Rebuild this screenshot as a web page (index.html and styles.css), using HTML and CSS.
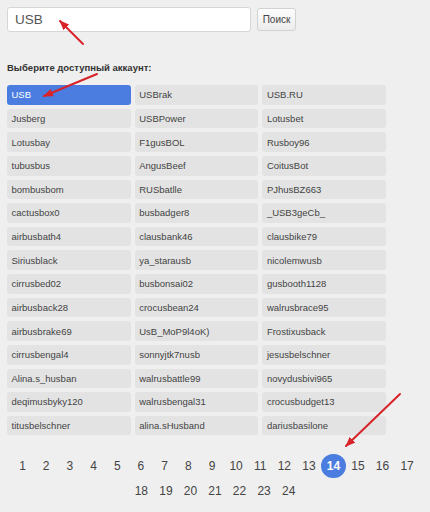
FILE: index.html
```html
<!DOCTYPE html>
<html lang="ru">
<head>
<meta charset="utf-8">
<title>Выбор аккаунта</title>
<link rel="stylesheet" href="styles.css">
</head>
<body>
<div class="page">
  <form class="search">
    <input class="search-input" type="text" value="USB">
    <button class="search-btn" type="button">Поиск</button>
  </form>

  <h3 class="label">Выберите доступный аккаунт:</h3>

  <div class="accounts">
    <button class="acc acc-active">USB</button>
    <button class="acc">USBrak</button>
    <button class="acc">USB.RU</button>
    <button class="acc">Jusberg</button>
    <button class="acc">USBPower</button>
    <button class="acc">Lotusbet</button>
    <button class="acc">Lotusbay</button>
    <button class="acc">F1gusBOL</button>
    <button class="acc">Rusboy96</button>
    <button class="acc">tubusbus</button>
    <button class="acc">AngusBeef</button>
    <button class="acc">CoitusBot</button>
    <button class="acc">bombusbom</button>
    <button class="acc">RUSbatlle</button>
    <button class="acc">PJhusBZ663</button>
    <button class="acc">cactusbox0</button>
    <button class="acc">busbadger8</button>
    <button class="acc">_USB3geCb_</button>
    <button class="acc">airbusbath4</button>
    <button class="acc">clausbank46</button>
    <button class="acc">clausbike79</button>
    <button class="acc">Siriusblack</button>
    <button class="acc">ya_starausb</button>
    <button class="acc">nicolemwusb</button>
    <button class="acc">cirrusbed02</button>
    <button class="acc">busbonsai02</button>
    <button class="acc">gusbooth1128</button>
    <button class="acc">airbusback28</button>
    <button class="acc">crocusbean24</button>
    <button class="acc">walrusbrace95</button>
    <button class="acc">airbusbrake69</button>
    <button class="acc">UsB_MoP9l4oK)</button>
    <button class="acc">Frostixusback</button>
    <button class="acc">cirrusbengal4</button>
    <button class="acc">sonnyjtk7nusb</button>
    <button class="acc">jesusbelschner</button>
    <button class="acc">Alina.s_husban</button>
    <button class="acc">walrusbattle99</button>
    <button class="acc">novydusbivi965</button>
    <button class="acc">deqimusbyky120</button>
    <button class="acc">walrusbengal31</button>
    <button class="acc">crocusbudget13</button>
    <button class="acc">titusbelschner</button>
    <button class="acc">alina.sHusband</button>
    <button class="acc">dariusbasilone</button>
  </div>

  <nav class="pager">
    <a class="pg">1</a><a class="pg">2</a><a class="pg">3</a><a class="pg">4</a><a class="pg">5</a><a class="pg">6</a><a class="pg">7</a><a class="pg">8</a><a class="pg">9</a><a class="pg">10</a><a class="pg">11</a><a class="pg">12</a><a class="pg">13</a><a class="pg pg-active">14</a><a class="pg">15</a><a class="pg">16</a><a class="pg">17</a><a class="pg">18</a><a class="pg">19</a><a class="pg">20</a><a class="pg">21</a><a class="pg">22</a><a class="pg">23</a><a class="pg">24</a>
  </nav>

  <!-- red pointer arrows drawn over the form -->
  <svg class="arrows" width="430" height="512" viewBox="0 0 430 512">
    <defs>
      <marker id="head" markerUnits="userSpaceOnUse" markerWidth="10" markerHeight="8" refX="9" refY="4" orient="auto">
        <path d="M0,0 L10,4 L0,8 Z" fill="#d8232a"/>
      </marker>
    </defs>
    <line x1="83" y1="44" x2="60" y2="21" class="arrow" marker-end="url(#head)"/>
    <line x1="97" y1="74" x2="44" y2="96" class="arrow" marker-end="url(#head)"/>
    <line x1="400" y1="394" x2="346" y2="446" class="arrow" marker-end="url(#head)"/>
  </svg>
</div>
</body>
</html>
```

FILE: styles.css
```css
html, body {
  margin: 0;
  padding: 0;
  background: #efefef;
}

.page {
  position: relative;
  width: 430px;
  height: 512px;
  box-sizing: border-box;
  padding: 7px 7px 0 7px;
  font-family: "Liberation Sans", Arial, sans-serif;
  color: #444;
  overflow: hidden;
}

/* search row */
.search {
  display: flex;
  align-items: center;
  gap: 6px;
  margin: 0;
}

.search-input {
  width: 244px;
  height: 25px;
  box-sizing: border-box;
  margin: 0;
  padding: 0 7px;
  border: 1px solid #d6d6d6;
  border-radius: 3px;
  background: #fff;
  font-family: "Liberation Sans", Arial, sans-serif;
  font-size: 13.5px;
  color: #555;
  outline: none;
}

.search-btn {
  width: 39px;
  height: 23px;
  margin: 0;
  padding: 0;
  box-sizing: border-box;
  border: 1px solid #d2d2d2;
  border-radius: 3px;
  background: linear-gradient(#fdfdfd, #ececec);
  font-family: "Liberation Sans", Arial, sans-serif;
  font-size: 10px;
  color: #444;
}

.label {
  margin: 30px 0 11px 0;
  font-size: 9.5px;
  line-height: 12px;
  font-weight: bold;
  color: #333;
}

/* account grid */
.accounts {
  display: grid;
  grid-template-columns: repeat(3, 123.7px);
  grid-auto-rows: 19.7px;
  column-gap: 4px;
  row-gap: 3.94px;
}

.acc {
  margin: 0;
  padding: 0 0 0 4.5px;
  border: 0;
  border-radius: 3px;
  background: #e3e3e3;
  text-align: left;
  font-family: "Liberation Sans", Arial, sans-serif;
  font-size: 9.5px;
  color: #444;
  white-space: nowrap;
  overflow: hidden;
}

.acc-active {
  background: #4a7ddf;
  color: #fff;
}

/* pagination */
.pager {
  display: flex;
  flex-wrap: wrap;
  justify-content: center;
  row-gap: 1px;
  margin-top: 19px;
}

.pg {
  min-width: 23.7px;
  height: 24px;
  box-sizing: border-box;
  padding: 0 5.6px;
  display: flex;
  align-items: center;
  justify-content: center;
  font-size: 12px;
  color: #444;
  border-radius: 12px;
}

.pg-active {
  background: #4a7ddf;
  color: #fff;
  font-weight: bold;
}

.arrows {
  position: absolute;
  left: 0;
  top: 0;
  pointer-events: none;
}

.arrow {
  stroke: #d8232a;
  stroke-width: 2;
  stroke-linecap: round;
}
```
